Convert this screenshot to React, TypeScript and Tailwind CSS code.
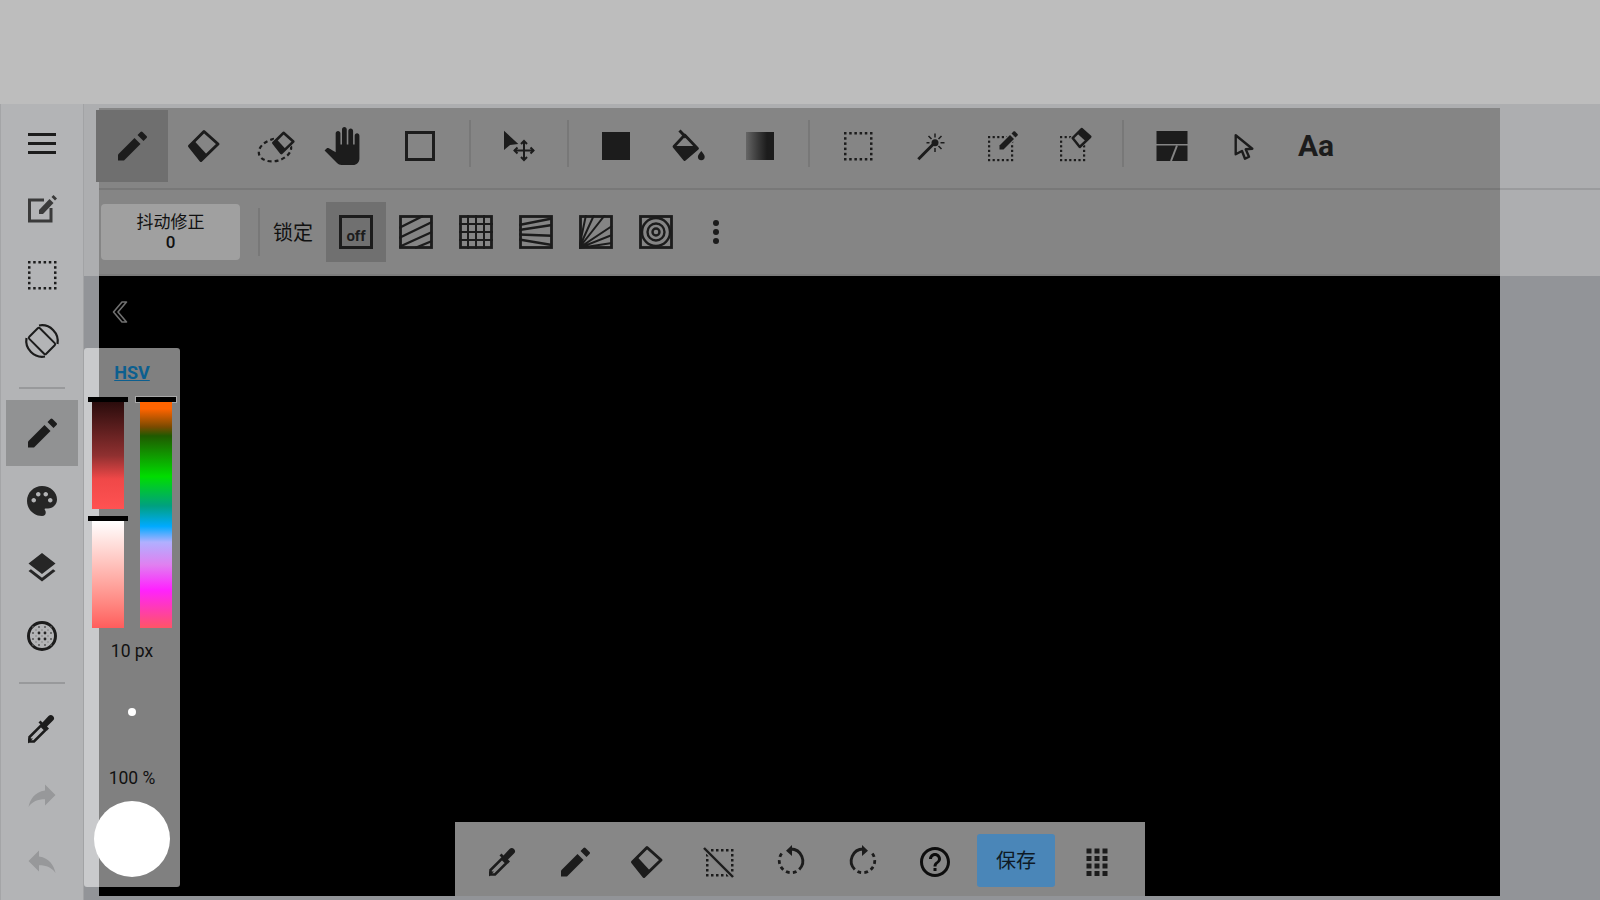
import type { ReactNode } from "react"
import { MdHelpOutline, MdLayers, MdPalette, MdPanTool, MdReply } from "react-icons/md"

const INK = "#1c1c1c"
const BAR = "#858585"

function Ico({ children }: { children: ReactNode }) {
  return (
    <svg width="40" height="40" viewBox="-4 -4 40 40" fill={INK} className="overflow-visible">
      {children}
    </svg>
  )
}

// square dots running round a rectangle, the way the selection icons look
function DotRect({ x, y, nx, ny, step, size }: { x: number; y: number; nx: number; ny: number; step: number; size: number }) {
  const dots: [number, number][] = []
  for (let i = 0; i <= nx; i++) {
    dots.push([x + i * step, y], [x + i * step, y + ny * step])
  }
  for (let j = 1; j < ny; j++) {
    dots.push([x, y + j * step], [x + nx * step, y + j * step])
  }
  return (
    <g>
      {dots.map(([dx, dy]) => (
        <rect key={`${dx}-${dy}`} x={dx} y={dy} width={size} height={size} />
      ))}
    </g>
  )
}

const Pencil = () => (
  <Ico>
    <path d="M2 30.500v-6L18.500 8l6 6L8 30.500z" strokeLinejoin="round" />
    <path d="M21.500 5 24.500 2c.7-.7 1.300-.7 2 0l4 4c.7.7.7 1.300 0 2l-3 3z" />
  </Ico>
)

const Eraser = () => (
  <Ico>
    <path d="M1 16 6.200 10.800 19.300 25 13 31z" />
    <path d="M16 1.500 30 14 13 30.500 1.500 16z" fill="none" stroke={INK} strokeWidth="3" strokeLinejoin="round" />
  </Ico>
)

const LassoEraser = () => (
  <Ico>
    <ellipse cx="15" cy="20" rx="16.500" ry="11" transform="rotate(-15 15 20)" fill="none" stroke={INK} strokeWidth="2.200" strokeDasharray="4 3" />
    <g transform="translate(12.300 1.800) scale(0.7)">
      <path d="M-3 16 16 -3 34 14 13 34z" fill={BAR} />
      <path d="M1 16 6.200 10.800 19.300 25 13 31z" />
      <path d="M16 1.500 30 14 13 30.500 1.500 16z" fill="none" stroke={INK} strokeWidth="3.800" strokeLinejoin="round" />
    </g>
  </Ico>
)

const MoveTool = () => (
  <Ico>
    <path d="M0 0.700 14.300 14 6 15 0 20z" />
    <g fill="none" stroke={INK} strokeWidth="2">
      <path d="M20 11v19M10.500 20.500h19" />
      <path d="M17 14l3-3 3 3M17 27l3 3 3-3M13.500 17.500l-3 3 3 3M26.500 17.500l3 3-3 3" />
    </g>
  </Ico>
)

const Bucket = () => (
  <Ico>
    <path d="M1.700 16H23l3 3L12.700 30.300z" />
    <path d="M12.700 5 25.500 18.500 12.700 29.500 2 16.500z" fill="none" stroke={INK} strokeWidth="2.800" strokeLinejoin="round" />
    <path d="M7.500 0.500l6.500 7" fill="none" stroke={INK} strokeWidth="3" />
    <path d="M29.300 21c2 2.500 3.400 4 3.400 5.800a3.400 3.400 0 0 1-6.800 0c0-1.800 1.400-3.300 3.400-5.800z" />
  </Ico>
)

const DotBox = () => (
  <Ico>
    <DotRect x={2} y={2} nx={5} ny={5} step={5.200} size={2.500} />
  </Ico>
)

const Wand = () => (
  <Ico>
    <path d="M4.300 29.300 19.500 14" fill="none" stroke={INK} strokeWidth="3" />
    <circle cx="21" cy="12.700" r="3.500" />
    <path d="M21 3.500v4M21 18v4M30.500 12.700h-4M15.500 12.700h-3M27.500 6l-3 3M27.500 19l-3-3M14.500 6l3 3" fill="none" stroke={INK} strokeWidth="1.500" />
  </Ico>
)

const SelectPen = () => (
  <Ico>
    <DotRect x={2} y={6} nx={5} ny={5} step={4.600} size={2.200} />
    <path d="M13.500 19.500v-4L24 5l4 4-10.500 10.500z" stroke={BAR} strokeWidth="2.500" paintOrder="stroke" />
    <path d="M25.500 3.500 27.500 1.500c.5-.5 1-.5 1.500 0L31.500 4c.5.5.5 1 0 1.500l-2 2z" />
  </Ico>
)

const SelectEraser = () => (
  <Ico>
    <DotRect x={2} y={6} nx={5} ny={5} step={4.600} size={2.200} />
    <g transform="translate(13.700 -1.900) scale(0.62)">
      <path d="M-3 16 16 -3 34 14 13 34z" fill={BAR} />
      <path d="M16 1 31 14 23 21.500 8.500 8.500z" />
      <path d="M16 1.500 30 14 13 30.500 1.500 16z" fill="none" stroke={INK} strokeWidth="4" strokeLinejoin="round" />
    </g>
  </Ico>
)

const LayoutTool = () => (
  <Ico>
    <rect x="0.500" y="1" width="31" height="13" />
    <rect x="0.500" y="15.500" width="31" height="15.500" />
    <path d="M21 15.500 15 31" fill="none" stroke={BAR} strokeWidth="2" />
  </Ico>
)

const CursorTool = () => (
  <Ico>
    <path d="M7.700 5.300V24.300L14 21l3 7.700 4-2-3.300-7.400 6.600-.6z" fill="none" stroke={INK} strokeWidth="2.400" strokeLinejoin="round" />
  </Ico>
)

const MenuLines = () => (
  <Ico>
    <rect x="2" y="6" width="28" height="3" />
    <rect x="2" y="15" width="28" height="3" />
    <rect x="2" y="24" width="28" height="3" />
  </Ico>
)

const EditBox = () => (
  <Ico>
    <path d="M18 7H3.500V28H25V15" fill="none" stroke="#3a3a3a" strokeWidth="3" />
    <path d="M13 21v-4L23.500 6l4 4L17 21z" fill="#3a3a3a" />
    <path d="M25.500 4 27.500 2l3.500 3.500-2 2z" fill="#3a3a3a" />
  </Ico>
)

const RotateTool = () => (
  <Ico>
    <rect x="8.500" y="4" width="15" height="24" rx="1.500" transform="rotate(-45 16 16)" fill="none" stroke={INK} strokeWidth="2" />
    <path d="M13 .500A16 16 0 0 1 31.500 19M19 31.500A16 16 0 0 1 .500 13" fill="none" stroke={INK} strokeWidth="2.200" />
  </Ico>
)

const Halftone = () => (
  <Ico>
    <circle cx="16" cy="16" r="13.500" fill="none" stroke={INK} strokeWidth="3" />
    {[7, 13, 19, 25].flatMap((x) =>
      [7, 13, 19, 25].map((y) => {
        const inner = Math.abs(x - 16) < 5 && Math.abs(y - 16) < 5
        return <circle key={`${x}-${y}`} cx={x} cy={y} r={inner ? 1.400 : 1} fill={inner ? "#262626" : "#555555"} />
      }),
    )}
    {[10, 16, 22].flatMap((x) =>
      [10, 16, 22].map((y) => <circle key={`m${x}-${y}`} cx={x} cy={y} r={0.700} fill="#777777" />),
    )}
  </Ico>
)

const Dropper = () => (
  <Ico>
    <path d="M3.500 28.500v-4.500L15 12.500l4.500 4.500L8 28.500z" fill="none" stroke={INK} strokeWidth="2.600" />
    <path d="M2 30.500v-5h5z" />
    <path d="M12.500 9.500l2-2 2 2 6-6.500c1.500-1.500 3-1.500 4.500 0s1.500 3 0 4.500l-6 6 2 2-2 2z" />
  </Ico>
)

const NoSelect = () => (
  <Ico>
    <DotRect x={3} y={3} nx={5} ny={5} step={5} size={2.500} />
    <path d="M1 2 30 31" fill="none" stroke={BAR} strokeWidth="5" />
    <path d="M1 2 30 31" fill="none" stroke={INK} strokeWidth="2.400" />
  </Ico>
)

const UndoRing = ({ flip }: { flip?: boolean }) => (
  <Ico>
    <g transform={flip ? "matrix(-1 0 0 1 32 0)" : undefined} fill="none" stroke={INK} strokeWidth="2.800">
      <path d="M15.700 3A12 12 0 0 1 24.200 23.500" />
      <path d="M21.500 25.500A12 12 0 0 1 7.500 6.500" strokeDasharray="3.800 3.200" />
      <path d="M11 4.700 17 -1V10z" fill={INK} stroke="none" />
    </g>
  </Ico>
)

const DotGrid = () => (
  <Ico>
    {[5.500, 13.500, 21.500].flatMap((x) =>
      [2.500, 10, 17.500, 25].map((y) => <rect key={`${x}-${y}`} x={x} y={y} width="5" height="5" />),
    )}
  </Ico>
)

function LockFrame({ children }: { children: ReactNode }) {
  return (
    <svg width="34" height="34" viewBox="0 0 34 34" fill="none" stroke={INK} strokeWidth="2.400">
      {children}
      <rect x="1.500" y="1.500" width="31" height="31" strokeWidth="2.800" />
    </svg>
  )
}

function Tile({ active, children }: { active?: boolean; children: ReactNode }) {
  return (
    <div className={`flex h-[72px] w-[72px] shrink-0 items-center justify-center ${active ? "bg-[#6f6f6f]" : ""}`}>
      {children}
    </div>
  )
}

function BottomTile({ children }: { children: ReactNode }) {
  return <div className="flex h-[68px] w-[72px] shrink-0 items-center justify-center">{children}</div>
}

function LockTile({ active, children }: { active?: boolean; children: ReactNode }) {
  return (
    <div className={`flex h-[60px] w-[60px] shrink-0 items-center justify-center ${active ? "bg-[#707070]" : ""}`}>
      {children}
    </div>
  )
}

function BarDivider({ className }: { className: string }) {
  return (
    <div className={`flex shrink-0 justify-center ${className}`}>
      <div className="h-[47px] w-[2px] bg-[#787878]" />
    </div>
  )
}

function SideItem({ active, className = "", children }: { active?: boolean; className?: string; children: ReactNode }) {
  return (
    <div className={`flex h-[66px] w-[72px] shrink-0 items-center justify-center ${active ? "bg-[#919293]" : ""} ${className}`}>
      {children}
    </div>
  )
}

function Sidebar() {
  return (
    <aside className="flex w-[84px] shrink-0 flex-col items-center border-r border-r-[#a2a3a5] border-l border-l-[#a4a5a7] bg-[#b3b4b6] pt-[6px]">
      <SideItem>
        <MenuLines />
      </SideItem>
      <SideItem>
        <EditBox />
      </SideItem>
      <SideItem>
        <DotBox />
      </SideItem>
      <SideItem>
        <RotateTool />
      </SideItem>
      <div className="mt-[13px] mb-[11px] h-[2px] w-[46px] bg-[#98999b]" />
      <SideItem active>
        <Pencil />
      </SideItem>
      <SideItem className="mt-[2px]">
        <MdPalette size={36} color="#262626" />
      </SideItem>
      <SideItem className="mt-[1px]">
        <MdLayers size={36} color="#262626" />
      </SideItem>
      <SideItem className="mt-[2px]">
        <Halftone />
      </SideItem>
      <div className="mt-[13px] mb-[12px] h-[2px] w-[46px] bg-[#98999b]" />
      <SideItem>
        <Dropper />
      </SideItem>
      <SideItem>
        <MdReply size={36} color="#97989a" className="-scale-x-100" />
      </SideItem>
      <SideItem>
        <MdReply size={36} color="#97989a" />
      </SideItem>
    </aside>
  )
}

function TopTools() {
  return (
    <div className="-ml-[3px] flex h-[80px] items-start pt-[2px]">
      <Tile active>
        <Pencil />
      </Tile>
      <Tile>
        <Eraser />
      </Tile>
      <Tile>
        <LassoEraser />
      </Tile>
      <Tile>
        <div className="-ml-[12px]">
          <MdPanTool size={38} color={INK} />
        </div>
      </Tile>
      <Tile>
        <div className="h-[30px] w-[30px] border-[3px] border-[#1c1c1c]" />
      </Tile>
      <BarDivider className="w-[28px] pt-[10px]" />
      <Tile>
        <MoveTool />
      </Tile>
      <BarDivider className="w-[24px] pt-[10px]" />
      <Tile>
        <div className="h-[28px] w-[28px] bg-[#1c1c1c]" />
      </Tile>
      <Tile>
        <Bucket />
      </Tile>
      <Tile>
        <div className="h-[28px] w-[28px] bg-linear-to-r from-[#666666] to-[#1c1c1c] to-75%" />
      </Tile>
      <BarDivider className="w-[26px] pt-[10px]" />
      <Tile>
        <DotBox />
      </Tile>
      <Tile>
        <Wand />
      </Tile>
      <Tile>
        <SelectPen />
      </Tile>
      <Tile>
        <SelectEraser />
      </Tile>
      <BarDivider className="w-[26px] pt-[10px]" />
      <Tile>
        <LayoutTool />
      </Tile>
      <Tile>
        <CursorTool />
      </Tile>
      <Tile>
        <span className="-mt-[2px] text-[30px] font-bold text-[#1c1c1c]">Aa</span>
      </Tile>
    </div>
  )
}

function LockRow() {
  return (
    <div className="flex h-[88px] items-center border-t-2 border-b-2 border-t-[#787878] border-b-[#7c7c7c] pl-[2px]">
      <div className="flex h-[56px] w-[139px] shrink-0 flex-col items-center justify-center rounded-[4px] bg-[#a0a0a0] text-[17px] leading-[20px] text-[#111111]">
        <span>抖动修正</span>
        <span className="font-medium">0</span>
      </div>
      <div className="ml-[18px] h-[48px] w-[2px] shrink-0 bg-[#787878]" />
      <span className="ml-[13px] mr-[13px] mt-[2px] shrink-0 text-[20px] text-[#111111]">锁定</span>
      <LockTile active>
        <div className="flex h-[34px] w-[34px] items-end justify-center border-[3px] border-[#1c1c1c] text-[15px] leading-[19px] font-bold text-[#1c1c1c]">
          off
        </div>
      </LockTile>
      <LockTile>
        <LockFrame>
          <path d="M0 13 24 1M0 23 33 7M0 32 33 17M16 33 33 26" />
        </LockFrame>
      </LockTile>
      <LockTile>
        <LockFrame>
          <path d="M9 0V34M17 0V34M25 0V34M0 9H34M0 17H34M0 25H34" strokeWidth="2" />
        </LockFrame>
      </LockTile>
      <LockTile>
        <LockFrame>
          <path d="M0 10 33 3.500M0 15 33 10M0 19.500 33 20.700M0 24.500 33 30" />
        </LockFrame>
      </LockTile>
      <LockTile>
        <LockFrame>
          <path d="M0 33 7 0M0 33 15 0M0 33 26 0M0 33 33 11M0 33 33 20M0 33 33 28" strokeWidth="2" />
        </LockFrame>
      </LockTile>
      <LockTile>
        <LockFrame>
          <circle cx="17" cy="17" r="14" />
          <circle cx="17" cy="17" r="8.500" />
          <circle cx="17" cy="17" r="3.500" />
        </LockFrame>
      </LockTile>
      <LockTile>
        <div className="flex flex-col gap-[3px]">
          <div className="h-[6px] w-[6px] rounded-full bg-[#1c1c1c]" />
          <div className="h-[6px] w-[6px] rounded-full bg-[#1c1c1c]" />
          <div className="h-[6px] w-[6px] rounded-full bg-[#1c1c1c]" />
        </div>
      </LockTile>
    </div>
  )
}

function ColorPanel() {
  return (
    <div className="absolute top-[244px] left-[84px] z-20 flex h-[539px] w-[96px] flex-col items-center rounded-[3px] bg-white/50 pt-[15px]">
      <span className="text-[18px] leading-[20px] font-bold text-[#0c5f8f] underline">HSV</span>
      <div className="mt-[14px] flex gap-[8px]">
        <div className="flex w-[40px] flex-col items-center">
          <div className="h-[5px] w-[40px] bg-black" />
          <div className="h-[107px] w-[32px] bg-[linear-gradient(to_bottom,#2a0c0c,#8f3030_50%,#f04848_72%,#ff5252)]" />
          <div className="mt-[7px] h-[5px] w-[40px] bg-black" />
          <div className="h-[107px] w-[32px] bg-linear-to-b from-white to-[#ff5c5c]" />
        </div>
        <div className="flex w-[40px] flex-col items-center">
          <div className="h-[5px] w-[40px] bg-black outline-1 outline-[#a8a8a8]" />
          <div className="h-[226px] w-[32px] bg-[linear-gradient(to_bottom,#ff6400,#ff6400_3%,#7a4a00_11%,#1f5a00_15%,#00dd00_33%,#00a080_46%,#00aaff_55%,#b0b0ff_62%,#e080f0_72%,#ff22ff_83%,#ff5566)]" />
        </div>
      </div>
      <span className="mt-[13px] text-[17.500px] leading-[20px] text-[#111]">10 px</span>
      <div className="mt-[47px] h-[8px] w-[8px] rounded-full bg-white" />
      <span className="mt-[52px] text-[17.500px] leading-[20px] text-[#111]">100 %</span>
      <div className="mt-[13px] h-[76px] w-[76px] rounded-full bg-white" />
    </div>
  )
}

function BottomBar() {
  return (
    <div className="absolute bottom-0 left-[356px] flex h-[74px] items-start bg-[#878787] px-[12px] pt-[6px]">
      <BottomTile>
        <Dropper />
      </BottomTile>
      <BottomTile>
        <Pencil />
      </BottomTile>
      <BottomTile>
        <Eraser />
      </BottomTile>
      <BottomTile>
        <NoSelect />
      </BottomTile>
      <BottomTile>
        <UndoRing />
      </BottomTile>
      <BottomTile>
        <UndoRing flip />
      </BottomTile>
      <BottomTile>
        <MdHelpOutline size={36} color="#0d0d0d" />
      </BottomTile>
      <button className="mt-[6px] ml-[6px] flex h-[53px] w-[78px] items-center justify-center rounded-[3px] bg-[#4a86b8] text-[20px] text-[#0e1a26]">
        保存
      </button>
      <div className="ml-[6px]">
        <BottomTile>
          <DotGrid />
        </BottomTile>
      </div>
    </div>
  )
}

export default function App() {
  return (
    <div className="flex h-[900px] w-[1600px] flex-col overflow-hidden bg-[#bdbdbd] font-[Roboto,'Noto_Sans_CJK_SC',sans-serif]">
      <div className="h-[104px] shrink-0 bg-[#bdbdbd]" />
      <div className="relative flex min-h-0 flex-1">
        <Sidebar />
        {/* strip between the sidebar and the canvas */}
        <div className="flex w-[15px] shrink-0 flex-col bg-[#929498]">
          <div className="h-[172px] bg-[#adaeb0]" />
        </div>
        <main className="z-10 flex w-[1401px] shrink-0 flex-col bg-[#929498]">
          <div className="h-[4px] shrink-0 bg-[#adaeb0]" />
          <div className="shrink-0 bg-[#858585]">
            <TopTools />
            <LockRow />
          </div>
          <div className="relative min-h-0 flex-1 bg-black">
            <svg width="16" height="22" viewBox="0 0 16 22" fill="none" stroke="#707070" strokeWidth="1.600" className="absolute top-[25px] left-[13px]">
              <path d="M10 1 1.500 11 10 21h4.500L6 11 14.500 1z" strokeLinejoin="round" />
            </svg>
            <BottomBar />
          </div>
          <div className="h-[4px] shrink-0" />
        </main>
        <div className="flex min-w-0 flex-1 flex-col bg-[#929498]">
          <div className="h-[86px] border-b-2 border-b-[#9a9b9d] bg-[#adaeb0]" />
          <div className="h-[86px] bg-[#adaeb0]" />
        </div>
        <ColorPanel />
      </div>
    </div>
  )
}
